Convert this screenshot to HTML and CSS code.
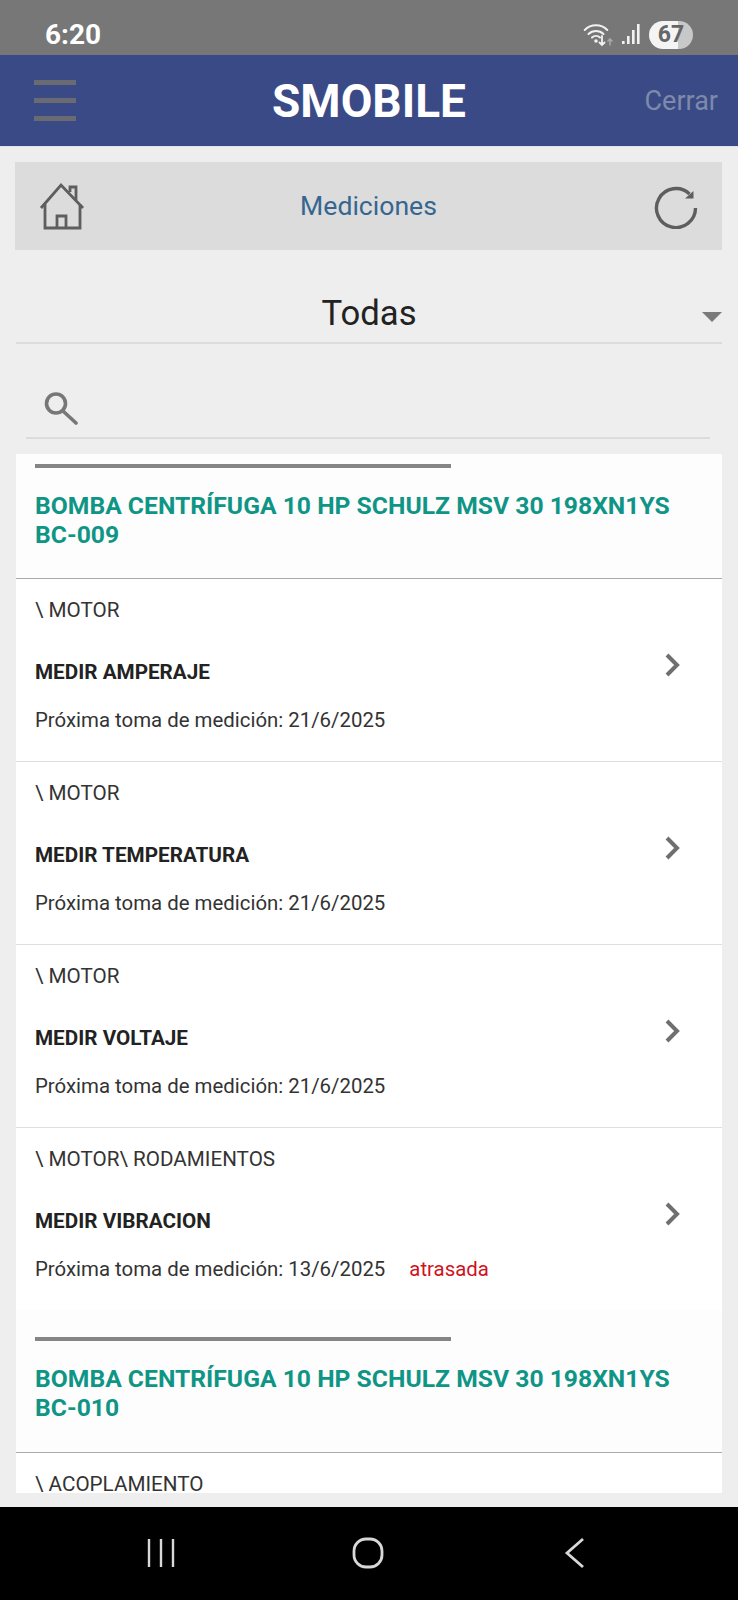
FILE: index.html
```html
<!DOCTYPE html>
<html lang="es">
<head>
<meta charset="utf-8">
<title>SMOBILE</title>
<link rel="stylesheet" href="styles.css">
</head>
<body>
<div class="screen">
  <div class="status">
    <span class="time">6:20</span>
    <div class="status-icons">
      <svg width="31" height="24" viewBox="0 0 31 24" fill="none" stroke="#f2f2f2" stroke-width="2" stroke-linecap="round">
        <path d="M2.7 7 A16 16 0 0 1 25.3 7"/><path d="M6.5 11 A11 11 0 0 1 21.5 11"/><path d="M10 14.5 A6 6 0 0 1 18 14.5"/>
        <circle cx="14" cy="18" r="1.8" fill="#f2f2f2" stroke="none"/>
        <path d="M20 13 V22 M17.5 19.5 L20 22 L22.5 19.5" stroke-width="1.8"/>
        <path d="M28 22 V16 M26 18 L28 16 L30 18" stroke="#a8a8a8" stroke-width="1.6"/>
      </svg>
      <svg width="20" height="21" viewBox="0 0 20 21" fill="#f2f2f2">
        <rect x="1" y="17" width="2.6" height="3"/><rect x="6" y="12" width="2.6" height="8"/><rect x="11" y="6" width="2.6" height="14"/><rect x="16" y="0" width="2.6" height="20"/>
      </svg>
      <span class="battery">67</span>
    </div>
  </div>
  <header class="appbar">
    <div class="burger"><i></i><i></i><i></i></div>
    <h1 class="brand">SMOBILE</h1>
    <span class="logout">Cerrar</span>
  </header>
  <main class="content">
    <div class="toolbar">
      <svg width="46" height="48" viewBox="0 0 46 48" fill="none" stroke="#5e5e5e" stroke-width="2.8">
        <path d="M2 26 L22 3 L44 26"/><path d="M31 10 V5 H37 V18"/><path d="M6 22 V46 H41 V22"/><path d="M18 46 V34 H27 V46"/>
      </svg>
      <span class="toolbar-title">Mediciones</span>
      <svg width="46" height="46" viewBox="0 0 46 46" fill="none" stroke="#5e5e5e" stroke-width="3.4">
        <path d="M43.5 25 A19.5 19.5 0 1 1 37.5 11"/><path d="M41.5 8 V15.5 H33 Z" fill="#5e5e5e" stroke="none"/>
      </svg>
    </div>
    <div class="select">
      <span class="select-label">Todas</span>
      <span class="caret"></span>
    </div>
    <div class="search">
      <svg width="36" height="34" viewBox="0 0 36 34" fill="none" stroke="#777" stroke-width="3.6">
        <circle cx="13" cy="12.5" r="9.5"/><path d="M20 20 L33 32" stroke-linecap="round"/>
      </svg>
    </div>
    <div class="list">
      <section class="group">
        <div class="group-head">
          <div class="rule"></div>
          <h2 class="group-title">BOMBA CENTRÍFUGA 10 HP SCHULZ MSV 30 198XN1YS<br>BC-009</h2>
        </div>
        <article class="item">
          <p class="path">\ MOTOR</p>
          <p class="name">MEDIR AMPERAJE</p>
          <p class="next">Próxima toma de medición: 21/6/2025</p>
          <svg class="chev" width="16" height="24" viewBox="0 0 16 24" fill="none" stroke="#6f6f6f" stroke-width="4"><path d="M3 2 L13 12 L3 22"/></svg>
        </article>
        <article class="item">
          <p class="path">\ MOTOR</p>
          <p class="name">MEDIR TEMPERATURA</p>
          <p class="next">Próxima toma de medición: 21/6/2025</p>
          <svg class="chev" width="16" height="24" viewBox="0 0 16 24" fill="none" stroke="#6f6f6f" stroke-width="4"><path d="M3 2 L13 12 L3 22"/></svg>
        </article>
        <article class="item">
          <p class="path">\ MOTOR</p>
          <p class="name">MEDIR VOLTAJE</p>
          <p class="next">Próxima toma de medición: 21/6/2025</p>
          <svg class="chev" width="16" height="24" viewBox="0 0 16 24" fill="none" stroke="#6f6f6f" stroke-width="4"><path d="M3 2 L13 12 L3 22"/></svg>
        </article>
        <article class="item last">
          <p class="path">\ MOTOR\ RODAMIENTOS</p>
          <p class="name">MEDIR VIBRACION</p>
          <p class="next">Próxima toma de medición: 13/6/2025<span class="late">atrasada</span></p>
          <svg class="chev" width="16" height="24" viewBox="0 0 16 24" fill="none" stroke="#6f6f6f" stroke-width="4"><path d="M3 2 L13 12 L3 22"/></svg>
        </article>
      </section>
      <section class="group">
        <div class="group-head second">
          <div class="rule"></div>
          <h2 class="group-title">BOMBA CENTRÍFUGA 10 HP SCHULZ MSV 30 198XN1YS<br>BC-010</h2>
        </div>
        <article class="item">
          <p class="path">\ ACOPLAMIENTO</p>
        </article>
      </section>
    </div>
  </main>
  <nav class="navbar">
    <svg width="30" height="32" viewBox="0 0 30 32" fill="none" stroke="#d8d8d8" stroke-width="2.4"><path d="M3 2 V30 M15 2 V30 M27 2 V30"/></svg>
    <svg width="32" height="32" viewBox="0 0 32 32" fill="none" stroke="#d8d8d8" stroke-width="2.8"><rect x="2" y="2" width="28" height="28" rx="12"/></svg>
    <svg class="nav-back" width="22" height="32" viewBox="0 0 22 32" fill="none" stroke="#d8d8d8" stroke-width="2.8"><path d="M19 2 L3 16 L19 30"/></svg>
  </nav>
</div>
</body>
</html>
```
FILE: styles.css
```css
* { box-sizing: border-box; }
html, body { margin: 0; padding: 0; }
body { font-family: Roboto, "Liberation Sans", sans-serif; background: #eee; }
p, h1, h2 { margin: 0; }
.screen { width: 738px; height: 1600px; display: flex; flex-direction: column; overflow: hidden; }
.status { height: 55px; flex: none; background: #777; display: flex; align-items: center; justify-content: space-between; padding: 14px 45px 0 45px; }
.time { color: #fff; font-size: 28px; font-weight: 700; }
.status-icons { display: flex; align-items: center; gap: 8px; }
.battery { width: 44px; height: 28px; border-radius: 14px; background: linear-gradient(90deg, #f4f4f4 0 66%, #c8c8c8 66%); color: #666; font-size: 23px; font-weight: 700; display: flex; align-items: center; justify-content: center; }
.appbar { height: 92px; flex: none; background: #3a4a87; border-bottom: 1px solid #dfe3ee; display: flex; align-items: center; justify-content: space-between; padding: 0 20px 0 34px; position: relative; }
.burger { width: 42px; display: flex; flex-direction: column; gap: 13px; }
.burger i { display: block; height: 5px; background: #6a6a72; }
.brand { position: absolute; left: 0; right: 0; text-align: center; color: #fff; font-size: 46px; font-weight: 700; line-height: 1; pointer-events: none; }
.logout { color: #7d8aa8; font-size: 27px; }
.content { flex: 1; min-height: 0; display: flex; flex-direction: column; padding: 15px 16px 14px 15px; }
.toolbar { height: 88px; flex: none; background: #dcdcdc; display: flex; align-items: center; justify-content: space-between; padding: 0 24px 0 24px; }
.toolbar-title { color: #36668f; font-size: 26.6px; padding-bottom: 2px; }
.select { height: 60px; margin: 34px 0 0 1px; flex: none; border-bottom: 2px solid #dcdcdc; display: flex; align-items: center; justify-content: center; position: relative; }
.select-label { color: #222; font-size: 34.7px; }
.caret { position: absolute; right: 0; top: 28px; border-left: 10px solid transparent; border-right: 10px solid transparent; border-top: 10px solid #7a7a7a; }
.search { height: 62px; flex: none; margin: 33px 12px 0 11px; border-bottom: 2px solid #dcdcdc; padding: 14px 0 0 17px; }
.search svg { display: block; }
.list { flex: 1; min-height: 0; overflow: hidden; margin: 15px 0 0 1px; }
.group { background: #fff; }
.group-head { height: 125px; background: #fdfdfd; border-bottom: 1.5px solid #aaa; padding: 10px 19px 0; }
.group-head.second { height: 143px; padding-top: 27px; }
.rule { width: 416px; height: 4px; background: #858585; }
.group-title { margin-top: 23px; color: #0f9586; font-size: 24.7px; font-weight: 700; line-height: 29px; white-space: nowrap; }
.item { height: 183px; padding: 19px 19px 0; border-bottom: 1px solid #dedede; position: relative; }
.item.last { height: 182px; border-bottom: 0; }
.path { color: #333; font-size: 20.65px; line-height: 25px; }
.name { margin-top: 37px; color: #222; font-size: 20.7px; font-weight: 700; line-height: 25px; }
.next { margin-top: 23px; color: #333; font-size: 20.4px; line-height: 25px; }
.late { margin-left: 24px; color: #d0121b; font-size: 20.4px; }
.chev { position: absolute; right: 42px; top: 74px; }
.navbar { height: 93px; flex: none; background: #000; display: flex; align-items: flex-start; padding: 30px 0 0 146px; gap: 176px; }
.nav-back { margin-left: 4px; }
```
